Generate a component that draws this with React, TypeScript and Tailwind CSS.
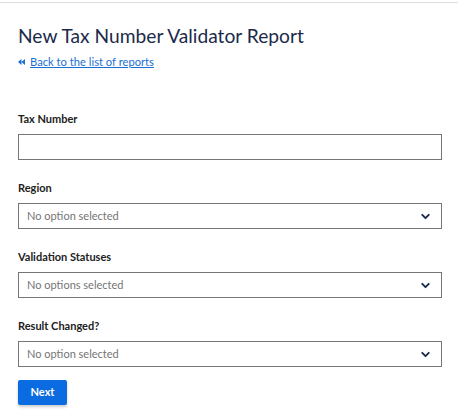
import { ChevronDown } from "lucide-react";

const font = { fontFamily: "Lato, 'Noto Sans', sans-serif" };

const Field = ({ label, children }: { label: string; children: React.ReactNode }) => (
  <div className="flex flex-col">
    <label className="text-[11px] leading-[14px] font-bold text-[#222222] mb-[8px]">{label}</label>
    {children}
  </div>
);

const Select = ({ placeholder }: { placeholder: string }) => (
  <div className="h-[26px] border border-[#767676] bg-white flex items-center justify-between pl-[8px] pr-[9px]">
    <span className="text-[11px] text-[#757575]">{placeholder}</span>
    <ChevronDown size={13} strokeWidth={3.5} className="text-[#1b2a4a]" />
  </div>
);

export default function App() {
  return (
    <div className="min-h-screen bg-white" style={font}>
      <div className="mt-[2px] border-t border-[#dedede]" />
      <div className="px-[18px] pt-[21px] w-[460px]">
        <h1 className="text-[19.2px] leading-[24px] text-[#1b2a4a]">New Tax Number Validator Report</h1>
        <div className="mt-[7px] flex items-center gap-[5px] text-[11.2px] leading-[14px]">
          <svg width="7" height="6" viewBox="0 0 7 6" className="text-[#1a6fd4]">
            <path d="M3.5 0 L0 3 L3.5 6 Z M7 0 L3.5 3 L7 6 Z" fill="currentColor" />
          </svg>
          <a href="#" className="text-[#1a6fd4] underline">Back to the list of reports</a>
        </div>

        <div className="mt-[43px] w-[424px] flex flex-col gap-[21px]">
          <Field label="Tax Number">
            <input className="h-[26px] border border-[#767676] bg-white px-[8px] text-[11px] outline-none" />
          </Field>
          <Field label="Region">
            <Select placeholder="No option selected" />
          </Field>
          <Field label="Validation Statuses">
            <Select placeholder="No options selected" />
          </Field>
          <Field label="Result Changed?">
            <Select placeholder="No option selected" />
          </Field>
        </div>

        <button className="mt-[13px] w-[49px] h-[25px] bg-[#0b6be0] text-white text-[11px] font-bold rounded-[2px] shadow-[0_2px_3px_rgba(0,0,0,0.2)]">
          Next
        </button>
      </div>
    </div>
  );
}
